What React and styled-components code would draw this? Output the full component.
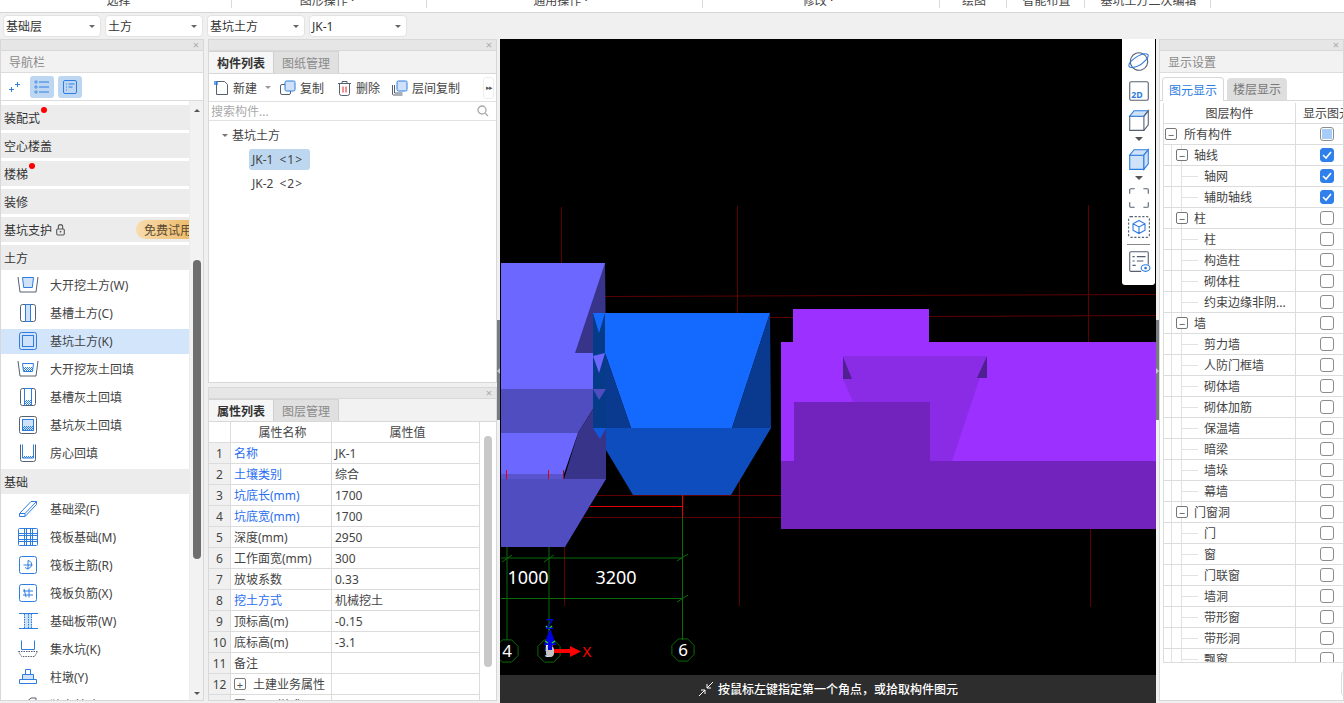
import React from "react";
import styled, { createGlobalStyle } from "styled-components";

const BLUE = "#2e7de0";
const LIGHT = "#cfe2fa";
const SLATE = "#566070";

const GlobalStyle = createGlobalStyle`
  html, body {
    margin: 0;
    padding: 0;
    overflow: hidden;
    background: #f0f0f0;
  }
  body {
    font-family: "Noto Sans", "Noto Sans CJK SC", sans-serif;
    font-size: 12px;
    color: #333;
  }
  * {
    box-sizing: border-box;
  }
`;

const Page = styled.div`
  width: 1344px;
  height: 703px;
  display: flex;
  flex-direction: column;
  overflow: hidden;
  background: #f0f0f0;
`;

const Ribbon = styled.div`
  height: 13px;
  display: flex;
  background: #fff;
  border-bottom: 1px solid #d6d6d6;
`;

const RibbonGroup = styled.div`
  width: ${(p) => p.$w}px;
  height: 8px;
  display: flex;
  align-items: flex-end;
  justify-content: center;
  padding-left: ${(p) => (p.$shift > 0 ? p.$shift : 0)}px;
  padding-right: ${(p) => (p.$shift < 0 ? -p.$shift : 0)}px;
  overflow: hidden;
  border-right: 1px solid #d9d9d9;
  color: #444;
  line-height: 14px;
  white-space: nowrap;
`;

const SelectBar = styled.div`
  height: 26px;
  display: flex;
  gap: 4px;
  padding: 2px 3px 0;
`;

const SelectBox = styled.div`
  width: 98px;
  height: 22px;
  display: flex;
  align-items: center;
  justify-content: space-between;
  padding: 0 5px 0 2px;
  background: #fff;
  border: 1px solid #e3e3e3;
  border-radius: 4px;
  color: #333;
`;

const Caret = styled.span`
  width: 0;
  height: 0;
  flex: none;
  margin-left: ${(p) => p.$left || 0}px;
  border-left: ${(p) => p.$size || 3}px solid transparent;
  border-right: ${(p) => p.$size || 3}px solid transparent;
  border-top: ${(p) => (p.$size ? p.$size : 3)}px solid ${(p) => p.$color || "#666"};
`;

const Main = styled.div`
  height: 664px;
  display: flex;
`;

const Panel = styled.div`
  display: flex;
  flex-direction: column;
  background: #fff;
  border: 1px solid #d8d8d8;
  overflow: hidden;
  width: ${(p) => (p.$w ? `${p.$w}px` : "100%")};
  height: ${(p) => (p.$h ? `${p.$h}px` : "auto")};
  flex: none;
`;

const PanelStrip = styled.div`
  height: 11px;
  flex: none;
  display: flex;
  align-items: center;
  justify-content: flex-end;
  padding-right: 4px;
  background: #e6e6e6;
  border-bottom: 1px solid #d8d8d8;
  color: #aaa;
  font-size: 11px;
  line-height: 10px;
`;

const PanelTitle = styled.div`
  height: 22px;
  flex: none;
  display: flex;
  align-items: center;
  padding-left: 8px;
  background: #f2f2f2;
  border-bottom: 1px solid #dcdcdc;
  color: #8a8a8a;
`;

const NavTools = styled.div`
  height: 28px;
  flex: none;
  display: flex;
  align-items: center;
  gap: 4px;
  padding-left: 3px;
  border-bottom: 1px solid #dcdcdc;
`;

const NavToolButton = styled.div`
  width: ${(p) => (p.$on ? 24 : 22)}px;
  height: 22px;
  display: flex;
  align-items: center;
  justify-content: center;
  border-radius: 3px;
  background: ${(p) => (p.$on ? "#bdd7f2" : "transparent")};
`;

const NavBody = styled.div`
  flex: 1;
  min-height: 0;
  display: flex;
`;

const NavRows = styled.div`
  width: 188px;
  flex: none;
  padding-top: 4px;
  overflow: hidden;
`;

const NavHeader = styled.div`
  position: relative;
  height: 25px;
  margin-bottom: 3px;
  display: flex;
  align-items: center;
  padding-left: 3px;
  background: #ececec;
  color: #333;
  svg {
    margin-left: 2px;
  }
`;

const RedDot = styled.span`
  position: absolute;
  left: ${(p) => p.$left}px;
  top: 2px;
  width: 6px;
  height: 6px;
  border-radius: 50%;
  background: #f00;
`;

const TrialBadge = styled.span`
  margin-left: auto;
  width: 53px;
  height: 19px;
  display: flex;
  align-items: center;
  padding-left: 8px;
  border-radius: 10px 0 0 10px;
  background: linear-gradient(to right, #f8dcae, #edbc6c);
  color: #5a4a30;
  white-space: nowrap;
  overflow: hidden;
`;

const NavItem = styled.div`
  height: 25px;
  margin-bottom: 3px;
  display: flex;
  align-items: center;
  padding: 0 0 1px 16px;
  background: ${(p) => (p.$on ? "#d2e5fb" : "#fff")};
  color: #444;
  svg {
    flex: none;
    margin-right: 11px;
  }
`;

const ScrollTrack = styled.div`
  flex: 1;
  display: flex;
  flex-direction: column;
  align-items: center;
  background: #f2f2f2;
  border-left: 1px solid #ececec;
`;

const ScrollArrow = styled.span`
  width: 0;
  height: 0;
  margin-top: ${(p) => p.$top}px;
  border-left: 3px solid transparent;
  border-right: 3px solid transparent;
  ${(p) => (p.$up ? "border-bottom: 3px solid #555;" : "border-top: 3px solid #555;")}
`;

const ScrollThumb = styled.div`
  width: 8px;
  height: ${(p) => p.$h}px;
  margin-top: ${(p) => p.$top}px;
  border-radius: 4px;
  background: ${(p) => p.$color};
`;

const MidColumn = styled.div`
  width: 289px;
  flex: none;
  display: flex;
  flex-direction: column;
  gap: 4px;
  margin-left: 4px;
`;

const TabRow = styled.div`
  height: 23px;
  flex: none;
  display: flex;
  background: #f2f2f2;
  border-bottom: 1px solid #d8d8d8;
`;

const Tab = styled.div`
  width: 65px;
  display: flex;
  align-items: center;
  justify-content: center;
  font-weight: ${(p) => (p.$on ? 600 : 400)};
  color: ${(p) => (p.$on ? "#333" : "#8a8a8a")};
  background: ${(p) => (p.$on ? "#f6f6f6" : "#e0e0e0")};
  border-right: 1px solid #cfcfcf;
  border-top: 1px solid #d4d4d4;
`;

const ActionBar = styled.div`
  position: relative;
  height: 28px;
  flex: none;
  display: flex;
  align-items: center;
  padding-left: 4px;
  border-bottom: 1px solid #e0e0e0;
`;

const Action = styled.div`
  display: flex;
  align-items: center;
  gap: 4px;
  margin-right: ${(p) => p.$gap}px;
  color: #444;
  white-space: nowrap;
`;

const MoreButton = styled.div`
  margin-left: auto;
  margin-right: 2px;
  width: 11px;
  height: 22px;
  display: flex;
  align-items: center;
  justify-content: center;
  border: 1px solid #eee;
  border-radius: 3px;
  color: #555;
  font-size: 7px;
  letter-spacing: -1px;
`;

const SearchRow = styled.div`
  height: 19px;
  flex: none;
  display: flex;
  align-items: center;
  justify-content: space-between;
  padding: 0 7px 0 2px;
  border-bottom: 1px solid #e2e2e2;
  color: #aaa;
`;

const TreeBlock = styled.div`
  padding: 3px 0 0 13px;
`;

const TreeGroup = styled.div`
  height: 22px;
  display: flex;
  align-items: center;
  gap: 4px;
  color: #444;
`;

const TreeLeaf = styled.div`
  width: 61px;
  height: 21px;
  margin: 3px 0 3px 27px;
  padding-left: 3px;
  display: flex;
  align-items: center;
  gap: 6px;
  border-radius: 3px;
  white-space: nowrap;
  background: ${(p) => (p.$on ? "#bdd7f0" : "transparent")};
  color: #444;
  span {
    letter-spacing: 1px;
  }
`;

const PropBody = styled.div`
  flex: 1;
  min-height: 0;
  display: flex;
`;

const PropTable = styled.div`
  width: 271px;
  flex: none;
  overflow: hidden;
  border-right: 1px solid #dcdcdc;
`;

const PropRow = styled.div`
  height: 21px;
  display: grid;
  grid-template-columns: 22px 101px 148px;
  border-bottom: 1px solid #dcdcdc;
`;

const PropIndex = styled.div`
  display: flex;
  align-items: center;
  justify-content: center;
  background: ${(p) => (p.$blank ? "#fff" : "#f0f0f0")};
  border-right: 1px solid #dcdcdc;
  color: #444;
`;

const PropCell = styled.div`
  display: flex;
  align-items: center;
  gap: 7px;
  padding-left: 3px;
  white-space: nowrap;
  color: ${(p) => (p.$link ? "#2a6ef0" : "#444")};
  justify-content: ${(p) => (p.$head ? "center" : "flex-start")};
  border-right: ${(p) => (p.$last ? "none" : "1px solid #dcdcdc")};
`;

const ExpandBox = styled.span`
  width: 12px;
  height: 12px;
  flex: none;
  display: inline-flex;
  align-items: center;
  justify-content: center;
  background: #fff;
  border: 1px solid #777;
  border-radius: 2px;
  color: #555;
  font-size: 11px;
  line-height: 9px;
`;

const PropScroll = styled.div`
  flex: 1;
  display: flex;
  flex-direction: column;
  align-items: center;
`;

const Splitter = styled.div`
  position: relative;
  width: 3px;
  flex: none;
  display: flex;
  flex-direction: column;
  padding-top: 281px;
  background: #f0f0f0;
  &::before {
    content: "";
    display: block;
    height: 100px;
    background: #767c82;
  }
  &::after {
    content: "";
    position: absolute;
    top: 329px;
    left: 0;
    border-top: 3px solid transparent;
    border-bottom: 3px solid transparent;
    ${(p) => (p.$left ? "border-right: 3px solid #c8c8c8;" : "border-left: 3px solid #c8c8c8;")}
  }
`;

const Canvas = styled.div`
  position: relative;
  width: 656px;
  flex: none;
  display: flex;
  flex-direction: column;
  background: #000;
`;

const Scene = styled.svg`
  display: block;
  width: 656px;
  height: 636px;
  flex: none;
`;

const StatusBar = styled.div`
  height: 28px;
  flex: none;
  display: flex;
  align-items: center;
  justify-content: center;
  gap: 4px;
  background: #2d2d2d;
  color: #fff;
  font-weight: 500;
`;

const ViewRail = styled.div`
  position: absolute;
  top: 0;
  right: 1px;
  width: 33px;
  height: 246px;
  display: flex;
  flex-direction: column;
  align-items: center;
  padding-top: 7px;
  background: #fff;
  border-radius: 0 0 3px 3px;
`;

const RailSlot = styled.div`
  height: ${(p) => p.$h}px;
  flex: none;
  display: flex;
  align-items: center;
  justify-content: center;
`;

const RailLine = styled.div`
  width: 23px;
  height: 1px;
  background: #888;
`;

const DisplayTabs = styled.div`
  height: 28px;
  flex: none;
  display: flex;
  align-items: flex-end;
  gap: 3px;
  padding-left: 2px;
  border-bottom: 1px solid #d8d8d8;
`;

const DisplayTab = styled.div`
  width: ${(p) => (p.$on ? 62 : 60)}px;
  height: ${(p) => (p.$on ? 24 : 22)}px;
  margin-bottom: ${(p) => (p.$on ? -1 : 0)}px;
  display: flex;
  align-items: center;
  justify-content: center;
  border-radius: 4px 4px 0 0;
  background: ${(p) => (p.$on ? "#fff" : "#dedede")};
  border: ${(p) => (p.$on ? "1px solid #d8d8d8" : "none")};
  border-bottom: none;
  color: ${(p) => (p.$on ? BLUE : "#777")};
`;

const LayerTable = styled.div`
  height: 560px;
  flex: none;
  margin: 2px 0 0 3px;
  overflow: hidden;
  border-left: 1px solid #dcdcdc;
  border-bottom: 1px solid #dcdcdc;
`;

const LayerRow = styled.div`
  height: 21px;
  display: grid;
  grid-template-columns: 132px 62px;
  border-bottom: 1px solid #dcdcdc;
`;

const LayerHead = styled.div`
  display: flex;
  align-items: center;
  justify-content: center;
  white-space: nowrap;
  overflow: ${(p) => (p.$clip ? "visible" : "hidden")};
  border-right: ${(p) => (p.$clip ? "none" : "1px solid #dcdcdc")};
  color: #444;
`;

const LayerName = styled.div`
  position: relative;
  display: flex;
  align-items: center;
  gap: 6px;
  padding-left: ${(p) => [1, 12, 40][p.$level]}px;
  border-right: 1px solid #dcdcdc;
  color: #444;
  white-space: nowrap;
  overflow: hidden;
  background-image: ${(p) =>
    p.$level > 0
      ? "linear-gradient(#e2e2e2, #e2e2e2), linear-gradient(#e2e2e2, #e2e2e2)"
      : "none"};
  background-repeat: no-repeat;
  background-size: 1px 100%, 1px 100%;
  background-position: 7px 0, 17px 0;
  > span:first-child {
    margin-right: ${(p) => (p.$level === 0 ? 1 : 0)}px;
  }
`;

const LeafTick = styled.span`
  position: absolute;
  left: 18px;
  top: 10px;
  width: 16px;
  height: 1px;
  background: #e2e2e2;
`;

const LayerCheck = styled.div`
  display: flex;
  align-items: center;
  justify-content: center;
`;

const CheckBox = styled.span`
  width: 14px;
  height: 14px;
  display: flex;
  align-items: center;
  justify-content: center;
  border-radius: 3px;
  border: 1px solid ${(p) => (p.$state === "on" ? "#2f80ed" : "#8c8c8c")};
  background: ${(p) => (p.$state === "on" ? "#2f80ed" : "#fff")};
  &::after {
    content: "";
    display: ${(p) => (p.$state === "part" ? "block" : "none")};
    width: 10px;
    height: 10px;
    background: #a6cdfa;
  }
`;

const PanelFoot = styled.div`
  flex: 1;
  display: flex;
  padding: 8px 0 0 181px;
`;

const FootButton = styled.div`
  width: 60px;
  height: 25px;
  flex: none;
  border: 1px solid #ddd;
  border-radius: 3px;
`;

const Dither = ({ x1, x2, y1, y2 }) => {
  const rows = [];
  for (let y = y1; y < y2; y++) {
    rows.push(
      <line key={y} x1={x1 + (y % 2)} x2={x2} y1={y + 0.5} y2={y + 0.5} stroke={BLUE} strokeDasharray="1 1" />
    );
  }
  return <>{rows}</>;
};

const navIcons = {
  openCut: (
    <>
      <path d="M1 2l2 15h16l2-15" fill="none" stroke={SLATE} />
      <path d="M5.500 2.500h11l-1.200 10H6.700z" fill={LIGHT} stroke={BLUE} />
    </>
  ),
  trench: (
    <>
      <rect x="3.500" y="1.500" width="15" height="17" rx="2" fill="#fff" stroke={SLATE} />
      <rect x="8.500" y="1.500" width="5" height="17" fill={LIGHT} stroke={BLUE} />
    </>
  ),
  pit: (
    <>
      <rect x="2.500" y="1.500" width="17" height="17" rx="2" fill={LIGHT} stroke={BLUE} />
      <rect x="5.500" y="4.500" width="11" height="11" fill={LIGHT} stroke={BLUE} />
    </>
  ),
  openFill: (
    <>
      <path d="M1 2l2 15h16l2-15" fill="none" stroke={SLATE} />
      <path d="M5.500 4.500h11l-1 8h-9z" fill="#fff" stroke={BLUE} />
      <Dither x1={6} x2={16} y1={8} y2={12} />
    </>
  ),
  trenchFill: (
    <>
      <rect x="3.500" y="1.500" width="15" height="17" rx="2" fill="#fff" stroke={SLATE} />
      <path d="M7.500 1.500v17M14.500 1.500v17M7.500 1.500h7" stroke={BLUE} fill="none" />
      <Dither x1={8} x2={14} y1={13} y2={18} />
    </>
  ),
  pitFill: (
    <>
      <rect x="2.500" y="1.500" width="17" height="17" rx="2" fill="#fff" stroke={SLATE} />
      <rect x="5.500" y="4.500" width="11" height="11" fill={LIGHT} stroke={BLUE} />
      <Dither x1={6} x2={16} y1={11} y2={15} />
    </>
  ),
  room: (
    <>
      <path d="M3.500 1.500v15a2 2 0 0 0 2 2h11a2 2 0 0 0 2-2v-15" fill="none" stroke={SLATE} />
      <path d="M5.500 1.500v13.500h11V1.500" fill="none" stroke={BLUE} />
      <Dither x1={6} x2={16} y1={13} y2={15} />
    </>
  ),
  beam: (
    <path d="M2.500 14.500L14 2.500h5.500v3L8 17.500H2.500zM2.500 14.500H8v3M8 14.500L19.500 2.500" fill="none" stroke={BLUE} />
  ),
  raft: (
    <>
      <rect x="1.500" y="1.500" width="19" height="17" rx="1" fill="#fff" stroke={BLUE} />
      <path d="M7.500 1.500v17M9.500 1.500v17M13.500 1.500v17M15.500 1.500v17M1.500 6.500h19M1.500 8.500h19M1.500 12.500h19M1.500 14.500h19" fill="none" stroke={BLUE} />
    </>
  ),
  mainBar: (
    <>
      <rect x="2.500" y="1.500" width="17" height="17" rx="2" fill="#fff" stroke={BLUE} />
      <path d="M11 5.500a4 4 0 1 1-3 7M6.500 10h9M11 5.500v9" fill="none" stroke={BLUE} />
    </>
  ),
  negBar: (
    <>
      <rect x="2.500" y="1.500" width="17" height="17" rx="2" fill="#fff" stroke={BLUE} />
      <path d="M6 8h10M6 12h10M12 5.500v9M7 6l2 8" fill="none" stroke={BLUE} />
    </>
  ),
  strip: (
    <>
      <rect x="7" y="3" width="8" height="14" fill={LIGHT} />
      <path d="M2 2.500h19M2 17.500h19" stroke={BLUE} />
      <path d="M7.500 3v14M11.500 3v14M14.500 3v14" stroke={BLUE} strokeDasharray="1.500 1" />
    </>
  ),
  sump: (
    <>
      <path d="M4.500 1.500v9h13v-9" fill="none" stroke={BLUE} />
      <path d="M1.500 12.500h19l-3 5h-13z" fill="#fff" stroke={SLATE} strokeDasharray="1.500 1" />
    </>
  ),
  pier: (
    <>
      <path d="M8.500 2.500h5v5h-5z" fill="#fff" stroke={BLUE} />
      <path d="M5.500 7.500h11v5h-11z" fill={LIGHT} stroke={BLUE} />
      <path d="M2.500 12.500h17v4h-17z" fill="#fff" stroke={BLUE} />
    </>
  ),
  footing: <path d="M6 10l8-7h5v6l-8 8H6z" fill="none" stroke={SLATE} />,
};

const NavIcon = ({ name }) => (
  <svg width="22" height="20" viewBox="0 0 22 20">{navIcons[name]}</svg>
);

const RAIL = {
  orbit: (
    <>
      <ellipse cx="10" cy="10.500" rx="8" ry="8" fill="none" stroke={SLATE} transform="rotate(-20 10 10.500)" />
      <path d="M1 15c-2-4 12-14 17-11 2 2-4 9-10 11-3 1-6 2-7 0z" fill="none" stroke={BLUE} />
    </>
  ),
  two: (
    <>
      <rect x="1.500" y="1.500" width="17" height="17" rx="1.500" fill="#fff" stroke={SLATE} />
      <text x="3" y="16" fontSize="8" fontWeight="700" fill={BLUE} fontFamily="Noto Sans, sans-serif">2D</text>
    </>
  ),
  cube: (
    <>
      <path d="M1.500 6.500h13v13h-13z" fill="#fff" stroke={SLATE} />
      <path d="M1.500 6.500l4-5h13l-4 5z" fill={LIGHT} stroke={BLUE} />
      <path d="M14.500 6.500l4-5v13l-4 5" fill="none" stroke={SLATE} />
    </>
  ),
  cubeOn: (
    <>
      <path d="M1.500 6.500h13v13h-13z" fill={LIGHT} stroke={BLUE} />
      <path d="M1.500 6.500l4-5h13l-4 5z" fill={LIGHT} stroke={BLUE} />
      <path d="M14.500 6.500l4-5v13l-4 5z" fill={LIGHT} stroke={BLUE} />
    </>
  ),
  corners: (
    <path d="M1.500 6V2.500a1 1 0 0 1 1-1H6M14 1.500h3.500a1 1 0 0 1 1 1V6M18.500 14v3.500a1 1 0 0 1-1 1H14M6 18.500H2.500a1 1 0 0 1-1-1V14" fill="none" stroke={SLATE} />
  ),
  boxed: (
    <>
      <rect x="0.500" y="0.500" width="19" height="19" rx="2" fill="none" stroke={SLATE} strokeDasharray="2 1.500" />
      <path d="M10 4l5.500 3v6L10 16l-5.500-3V7zM4.500 7l5.500 3 5.500-3M10 10v6" fill="none" stroke={BLUE} />
    </>
  ),
  listEye: (
    <>
      <path d="M12 19.500H2.500a1 1 0 0 1-1-1v-16a1 1 0 0 1 1-1h15a1 1 0 0 1 1 1v11" fill="#fff" stroke={SLATE} />
      <path d="M4 6h2M8 6h8M4 10h2M8 10h6M4 14h3" stroke={SLATE} />
      <ellipse cx="16" cy="16.500" rx="4" ry="3" fill="#fff" stroke={BLUE} />
      <circle cx="16" cy="16.500" r="1.300" fill={BLUE} />
    </>
  ),
};

const RailIcon = ({ name }) => (
  <svg width="24" height="24" viewBox="-1 -1 22 22">{RAIL[name]}</svg>
);

const octagon = (cx, cy, r) => {
  const pts = [];
  for (let i = 0; i < 8; i++) {
    const a = (Math.PI / 4) * i + Math.PI / 8;
    pts.push(`${(cx + r * Math.cos(a)).toFixed(1)},${(cy + r * Math.sin(a)).toFixed(1)}`);
  }
  return pts.join(" ");
};

const Model = () => {
  const dim = "#5c0000";
  const red = "#e80000";
  const green = "#0b6b0b";
  const lav = "#6c68ff";
  const lavDark = "#4f4dbf";
  const lavSide = "#38348a";
  const sky = "#1469ff";
  const skyDark = "#0a3a8f";
  const skyLow = "#0e4dbd";
  const violet = "#9b30ff";
  const violetLow = "#7223bd";
  const violetMid = "#8a2be6";
  return (
    <Scene viewBox="500 39 656 636">
      <g stroke={dim} strokeWidth="1" fill="none">
        <path d="M561.500 207V264M737.500 206V314M1088.500 205V342M605 296.500L1156 294.500M770 317.500H794M929 316.500L1156 315.500" />
        <path d="M596 495.500H781M583 517.500H781M739.500 480V606M564.500 544V606M1090.500 526V607M1090.500 457V461" />
      </g>
      <path d="M590 506.500H682M682.500 494V517" stroke={red} fill="none" />
      <g stroke={green} fill="none">
        <path d="M501 558H682M501 598.500H682M507 545V640M549 545V640M682.500 517V640" />
        <path d="M502 562l10-7M544 562l10-7M677 561l11-7M677 602l11-7" />
        <polygon points={octagon(507, 651, 12)} />
        <polygon points={octagon(549, 651, 12)} />
        <polygon points={octagon(683, 650, 12)} />
      </g>
      <g fill="#fff" fontFamily="Noto Sans, sans-serif" textAnchor="middle">
        <text x="528" y="584" fontSize="18">1000</text>
        <text x="616" y="584" fontSize="18">3200</text>
        <text x="507" y="657" fontSize="17">4</text>
        <text x="549" y="657" fontSize="17">5</text>
        <text x="683" y="656" fontSize="17">6</text>
      </g>

      <polygon points="501,263 605,263 605,353 593,389 501,389" fill={lav} />
      <polygon points="605,263 606,353 575,353" fill={lavSide} />
      <polygon points="501,389 593,389 593,409 578,433 501,433" fill={lavDark} />
      <polygon points="501,433 578,433 564,474 501,474" fill={lav} />
      <polygon points="593,409 606,389 606,479 564,479 578,433" fill={lavSide} />
      <polygon points="501,474 564,474 564,479 501,479" fill="#5a55cf" />
      <polygon points="501,479 606,479 565,547 501,547" fill={lavDark} />
      <path d="M506.500 470V479M548.500 470V479" stroke={red} />
      <path d="M563.500 470V479" stroke="#8a1030" />

      <polygon points="593,313 606,313 606,428 593,428" fill="#063b8a" />
      <polygon points="593,313 605,313 599,333" fill={sky} />
      <polygon points="593,356 605,353 599,373" fill={lav} />
      <polygon points="593,389 606,389 599,400" fill={lavDark} />
      <polygon points="593,428 606,428 600,439" fill="#1059dd" />
      <polygon points="605,313 770,313 732,428 631,428 605,353" fill={sky} />
      <polygon points="605,353 631,428 606,428" fill={skyDark} />
      <polygon points="770,313 771,428 732,428" fill={skyDark} />
      <polygon points="606,428 771,428 731,495 633,495 606,450" fill={skyLow} />

      <rect x="793" y="309" width="136" height="33" fill={violet} />
      <rect x="781" y="342" width="375" height="119" fill={violet} />
      <rect x="781" y="461" width="375" height="68" fill={violetLow} />
      <polygon points="843,356 987,356 952,461 930,461 930,402 853,402 843,379" fill={violetMid} />
      <rect x="794" y="402" width="136" height="59" fill={violetLow} />
      <polygon points="843,357 852,379 843,379" fill="#4f2090" />
      <polygon points="987,356 977,378 987,378" fill="#4f2090" />

      <rect x="546" y="646" width="8" height="11" rx="4" fill="#c4c4c4" />
      <path d="M554 651H570" stroke="#f00" strokeWidth="4" />
      <polygon points="570,646 581,651.500 570,657" fill="#f00" />
      <rect x="548" y="644" width="4" height="6" fill="#0000e0" />
      <polygon points="550,628 544,645 556,645" fill="#0000e0" />
      <path d="M546 626l3 3 3-3M545 641l3 2M555 641l-3 2" stroke="#1fdc1f" fill="none" strokeWidth="1.500" />
      <text x="550" y="629" fontSize="14" fill="#0000e0" textAnchor="middle" fontFamily="Noto Sans, sans-serif">Z</text>
      <text x="587" y="657" fontSize="15" fill="#f00" textAnchor="middle" fontFamily="Noto Sans, sans-serif">X</text>
    </Scene>
  );
};

const ribbon = [
  ["选择", 232, 6],
  ["图形操作 ·", 195, -4],
  ["通用操作 ·", 276, -8],
  ["修改 ·", 237, -6],
  ["绘图", 67, 2],
  ["智能布置", 78, 2],
  ["基坑土方二次编辑", 126, 2],
];

const navRows = [
  { head: "装配式", dot: 40 },
  { head: "空心楼盖" },
  { head: "楼梯", dot: 28 },
  { head: "装修" },
  { head: "基坑支护", lock: true, badge: "免费试用" },
  { head: "土方" },
  { icon: "openCut", text: "大开挖土方(W)" },
  { icon: "trench", text: "基槽土方(C)" },
  { icon: "pit", text: "基坑土方(K)", on: true },
  { icon: "openFill", text: "大开挖灰土回填" },
  { icon: "trenchFill", text: "基槽灰土回填" },
  { icon: "pitFill", text: "基坑灰土回填" },
  { icon: "room", text: "房心回填" },
  { head: "基础" },
  { icon: "beam", text: "基础梁(F)" },
  { icon: "raft", text: "筏板基础(M)" },
  { icon: "mainBar", text: "筏板主筋(R)" },
  { icon: "negBar", text: "筏板负筋(X)" },
  { icon: "strip", text: "基础板带(W)" },
  { icon: "sump", text: "集水坑(K)" },
  { icon: "pier", text: "柱墩(Y)" },
  { icon: "footing", text: "独立基础(D)" },
];

const props = [
  ["名称", "JK-1", true],
  ["土壤类别", "综合", true],
  ["坑底长(mm)", "1700", true],
  ["坑底宽(mm)", "1700", true],
  ["深度(mm)", "2950"],
  ["工作面宽(mm)", "300"],
  ["放坡系数", "0.33"],
  ["挖土方式", "机械挖土", true],
  ["顶标高(m)", "-0.15"],
  ["底标高(m)", "-3.1"],
  ["备注", ""],
  ["土建业务属性", "", false, true],
  ["显示样式", "", false, true],
];

const layers = [
  ["所有构件", 0, "part"],
  ["轴线", 1, "on"],
  ["轴网", 2, "on"],
  ["辅助轴线", 2, "on"],
  ["柱", 1],
  ["柱", 2],
  ["构造柱", 2],
  ["砌体柱", 2],
  ["约束边缘非阴...", 2],
  ["墙", 1],
  ["剪力墙", 2],
  ["人防门框墙", 2],
  ["砌体墙", 2],
  ["砌体加筋", 2],
  ["保温墙", 2],
  ["暗梁", 2],
  ["墙垛", 2],
  ["幕墙", 2],
  ["门窗洞", 1],
  ["门", 2],
  ["窗", 2],
  ["门联窗", 2],
  ["墙洞", 2],
  ["带形窗", 2],
  ["带形洞", 2],
  ["飘窗", 2],
];

const Strip = () => <PanelStrip>×</PanelStrip>;

const NavPanel = () => (
  <Panel $w={204} $h={662}>
    <Strip />
    <PanelTitle>导航栏</PanelTitle>
    <NavTools>
      <NavToolButton>
        <svg width="14" height="14" viewBox="0 0 14 14">
          <path d="M9.500 2v5M7 4.500h5M3.500 7v5M1 9.500h5" stroke={BLUE} fill="none" />
        </svg>
      </NavToolButton>
      <NavToolButton $on>
        <svg width="16" height="14" viewBox="0 0 16 14">
          <path d="M5 2h10M5 7h10M5 12h10" stroke={BLUE} fill="none" />
          <path d="M1 1h2v2H1zM1 6h2v2H1zM1 11h2v2H1z" stroke={BLUE} strokeWidth="0.700" fill="none" />
        </svg>
      </NavToolButton>
      <NavToolButton $on>
        <svg width="16" height="16" viewBox="0 0 16 16">
          <rect x="1.500" y="1.500" width="13" height="13" rx="1.500" fill="none" stroke={BLUE} />
          <path d="M4 5h1M6.500 5h6M4 8h1M6.500 8h4M4 11h1" stroke={BLUE} fill="none" />
        </svg>
      </NavToolButton>
    </NavTools>
    <NavBody>
      <NavRows>
        {navRows.map((row) =>
          row.head ? (
            <NavHeader key={row.head}>
              {row.head}
              {row.dot && <RedDot $left={row.dot} />}
              {row.lock && (
                <svg width="13" height="13" viewBox="0 0 12 12">
                  <rect x="2.500" y="5.500" width="7" height="5.500" rx="1" fill="none" stroke="#555" />
                  <path d="M4 5.500V3.500a2 2 0 0 1 4 0v2" fill="none" stroke="#555" />
                  <circle cx="6" cy="8" r="0.800" fill="#555" />
                </svg>
              )}
              {row.badge && <TrialBadge>{row.badge}</TrialBadge>}
            </NavHeader>
          ) : (
            <NavItem key={row.text} $on={row.on}>
              <NavIcon name={row.icon} />
              {row.text}
            </NavItem>
          )
        )}
      </NavRows>
      <ScrollTrack>
        <ScrollArrow $up $top={8} />
        <ScrollThumb $h={299} $top={148} $color="#6e6e6e" />
        <ScrollArrow $top={133} />
      </ScrollTrack>
    </NavBody>
  </Panel>
);

const ComponentPanel = () => (
  <Panel $h={344}>
    <Strip />
    <TabRow>
      <Tab $on>构件列表</Tab>
      <Tab>图纸管理</Tab>
    </TabRow>
    <ActionBar>
      <Action $gap={9}>
        <svg width="16" height="16" viewBox="0 0 16 16">
          <path d="M3.500 1.500h8l3 3v10h-11z" fill="#fff" stroke={SLATE} />
          <rect x="1" y="1" width="4" height="4" fill={BLUE} opacity="0.7" />
        </svg>
        新建
        <Caret $color="#999" $left={4} />
      </Action>
      <Action $gap={13}>
        <svg width="16" height="16" viewBox="0 0 16 16">
          <rect x="0.500" y="4.500" width="10" height="10" rx="1.500" fill="#fff" stroke={SLATE} />
          <rect x="5" y="1" width="10" height="10" rx="1.500" fill={LIGHT} stroke={BLUE} />
        </svg>
        复制
      </Action>
      <Action $gap={12}>
        <svg width="15" height="16" viewBox="0 0 15 16">
          <path d="M1 3.500h13M5 3.500V1.500h5v2M2.500 3.500v10a2 2 0 0 0 2 2h6a2 2 0 0 0 2-2v-10" fill="none" stroke={SLATE} />
          <path d="M6 6.500v6M9 6.500v6" stroke="#e02020" />
        </svg>
        删除
      </Action>
      <Action $gap={0}>
        <svg width="16" height="16" viewBox="0 0 16 16">
          <path d="M0.500 5v9a1 1 0 0 0 1 1h9" fill="none" stroke={SLATE} />
          <path d="M2.500 5v8h8" fill="none" stroke={SLATE} />
          <rect x="5" y="1" width="10" height="10" rx="1.500" fill={LIGHT} stroke={BLUE} />
        </svg>
        层间复制
      </Action>
      <MoreButton>▸▸</MoreButton>
    </ActionBar>
    <SearchRow>
      搜索构件...
      <svg width="12" height="12" viewBox="0 0 12 12">
        <circle cx="5" cy="5" r="4" fill="none" stroke="#aaa" strokeWidth="1.300" />
        <path d="M8 8l3 3" stroke="#aaa" strokeWidth="1.300" />
      </svg>
    </SearchRow>
    <TreeBlock>
      <TreeGroup>
        <Caret $color="#777" />
        基坑土方
      </TreeGroup>
      <TreeLeaf $on>JK-1 <span>&lt;1&gt;</span></TreeLeaf>
      <TreeLeaf>JK-2 <span>&lt;2&gt;</span></TreeLeaf>
    </TreeBlock>
  </Panel>
);

const PropertyPanel = () => (
  <Panel $h={314}>
    <Strip />
    <TabRow>
      <Tab $on>属性列表</Tab>
      <Tab>图层管理</Tab>
    </TabRow>
    <PropBody>
      <PropTable>
        <PropRow>
          <PropIndex $blank />
          <PropCell $head>属性名称</PropCell>
          <PropCell $head $last>属性值</PropCell>
        </PropRow>
        {props.map(([name, value, link, expand], i) => (
          <PropRow key={name}>
            <PropIndex>{i + 1}</PropIndex>
            <PropCell $link={link}>
              {expand && <ExpandBox>+</ExpandBox>}
              {name}
            </PropCell>
            <PropCell $last>{value}</PropCell>
          </PropRow>
        ))}
      </PropTable>
      <PropScroll>
        <ScrollThumb $h={231} $top={14} $color="#c8c8c8" />
      </PropScroll>
    </PropBody>
  </Panel>
);

const LayerPanel = () => (
  <Panel $w={185} $h={662}>
    <Strip />
    <PanelTitle>显示设置</PanelTitle>
    <DisplayTabs>
      <DisplayTab $on>图元显示</DisplayTab>
      <DisplayTab>楼层显示</DisplayTab>
    </DisplayTabs>
    <LayerTable>
      <LayerRow>
        <LayerHead>图层构件</LayerHead>
        <LayerHead $clip>显示图元</LayerHead>
      </LayerRow>
      {layers.map(([name, level, state], i) => (
        <LayerRow key={`${name}${i}`}>
          <LayerName $level={level}>
            {level < 2 ? <ExpandBox>−</ExpandBox> : <LeafTick />}
            {name}
          </LayerName>
          <LayerCheck>
            <CheckBox $state={state}>
              {state === "on" && (
                <svg width="10" height="10" viewBox="0 0 10 10">
                  <path d="M1 5l3 3 5-6" fill="none" stroke="#fff" strokeWidth="1.600" />
                </svg>
              )}
            </CheckBox>
          </LayerCheck>
        </LayerRow>
      ))}
    </LayerTable>
    <PanelFoot>
      <FootButton />
    </PanelFoot>
  </Panel>
);

const App = () => (
  <Page>
    <GlobalStyle />
    <Ribbon>
      {ribbon.map(([label, w, shift]) => (
        <RibbonGroup key={label} $w={w} $shift={shift}>{label}</RibbonGroup>
      ))}
    </Ribbon>
    <SelectBar>
      {["基础层", "土方", "基坑土方", "JK-1"].map((label) => (
        <SelectBox key={label}>
          {label}
          <Caret />
        </SelectBox>
      ))}
    </SelectBar>
    <Main>
      <NavPanel />
      <MidColumn>
        <ComponentPanel />
        <PropertyPanel />
      </MidColumn>
      <Splitter $left />
      <Canvas>
        <Model />
        <StatusBar>
          <svg width="16" height="16" viewBox="0 0 16 16">
            <path d="M15 1L9 7M9 3v4h4M1 15l6-6M3 9h4v4" fill="none" stroke="#fff" />
          </svg>
          按鼠标左键指定第一个角点，或拾取构件图元
        </StatusBar>
        <ViewRail>
          <RailSlot $h={30}><RailIcon name="orbit" /></RailSlot>
          <RailSlot $h={30}><RailIcon name="two" /></RailSlot>
          <RailSlot $h={28}><RailIcon name="cube" /></RailSlot>
          <RailSlot $h={10}><Caret $color="#555" $size={4} /></RailSlot>
          <RailSlot $h={30}><RailIcon name="cubeOn" /></RailSlot>
          <RailSlot $h={8}><Caret $color="#555" $size={4} /></RailSlot>
          <RailSlot $h={32}><RailIcon name="corners" /></RailSlot>
          <RailSlot $h={26}><RailIcon name="boxed" /></RailSlot>
          <RailSlot $h={8}><RailLine /></RailSlot>
          <RailSlot $h={26}><RailIcon name="listEye" /></RailSlot>
        </ViewRail>
      </Canvas>
      <Splitter />
      <LayerPanel />
    </Main>
  </Page>
);

export default App;
